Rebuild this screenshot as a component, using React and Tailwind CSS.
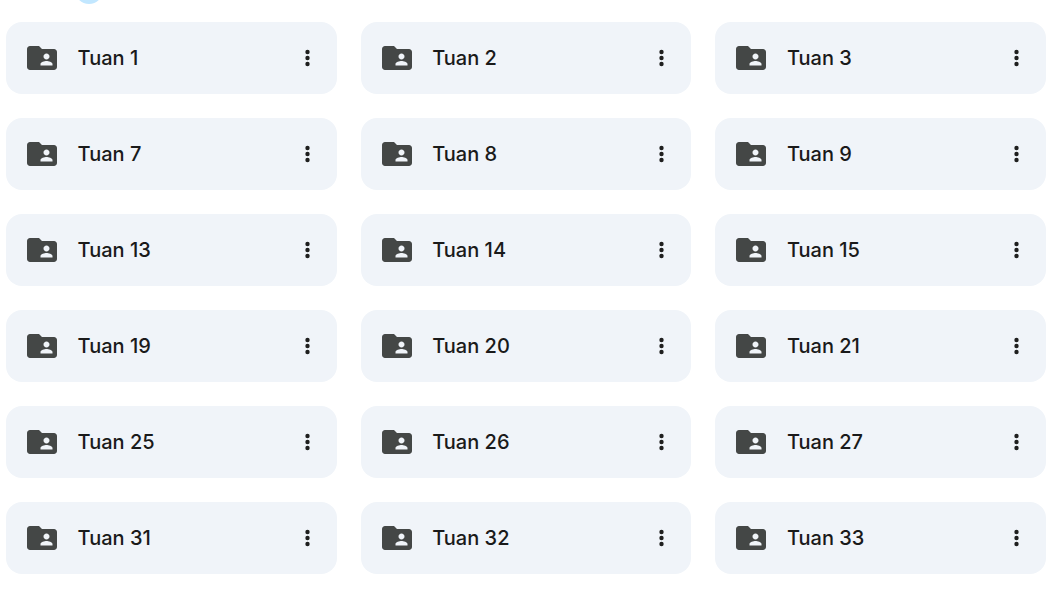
const rows = [
  [1, 2, 3],
  [7, 8, 9],
  [13, 14, 15],
  [19, 20, 21],
  [25, 26, 27],
  [31, 32, 33],
];

function FolderShared() {
  return (
    <svg viewBox="0 0 24 24" className="w-9 h-9 shrink-0" fill="#444746">
      <path d="M20 6h-8l-2-2H4c-1.1 0-1.99.9-1.99 2L2 18c0 1.1.9 2 2 2h16c1.1 0 2-.9 2-2V8c0-1.1-.9-2-2-2zm-5 3c1.1 0 2 .9 2 2s-.9 2-2 2-2-.9-2-2 .9-2 2-2zm4 8h-8v-1c0-1.33 2.67-2 4-2s4 .67 4 2v1z" />
    </svg>
  );
}

function MoreVert() {
  return (
    <svg viewBox="0 0 24 24" className="w-6 h-6 shrink-0" fill="#1f1f1f">
      <circle cx="11.5" cy="6" r="2.2" />
      <circle cx="11.5" cy="12" r="2.2" />
      <circle cx="11.5" cy="18" r="2.2" />
    </svg>
  );
}

function Card({ n }) {
  return (
    <div className="h-[72px] rounded-2xl bg-[#f0f4f9] flex items-center pl-[18px] pr-[17px]">
      <FolderShared />
      <span className="ml-[17.6px] flex-1 text-[20px] font-[450] text-[#1a1a1a] font-['Inter',sans-serif]">Tuan {n}</span>
      <MoreVert />
    </div>
  );
}

export default function App() {
  return (
    <div className="w-[1061px] h-[605px] bg-white overflow-hidden">
      <div className="h-[22px] overflow-hidden pl-[75px]">
        <div className="w-7 h-7 -mt-6 rounded-full bg-[#c2e7ff]" />
      </div>
      <div className="ml-[6px] w-[1040px] grid grid-cols-3 gap-6">
        {rows.flat().map((n) => (
          <Card key={n} n={n} />
        ))}
      </div>
    </div>
  );
}
